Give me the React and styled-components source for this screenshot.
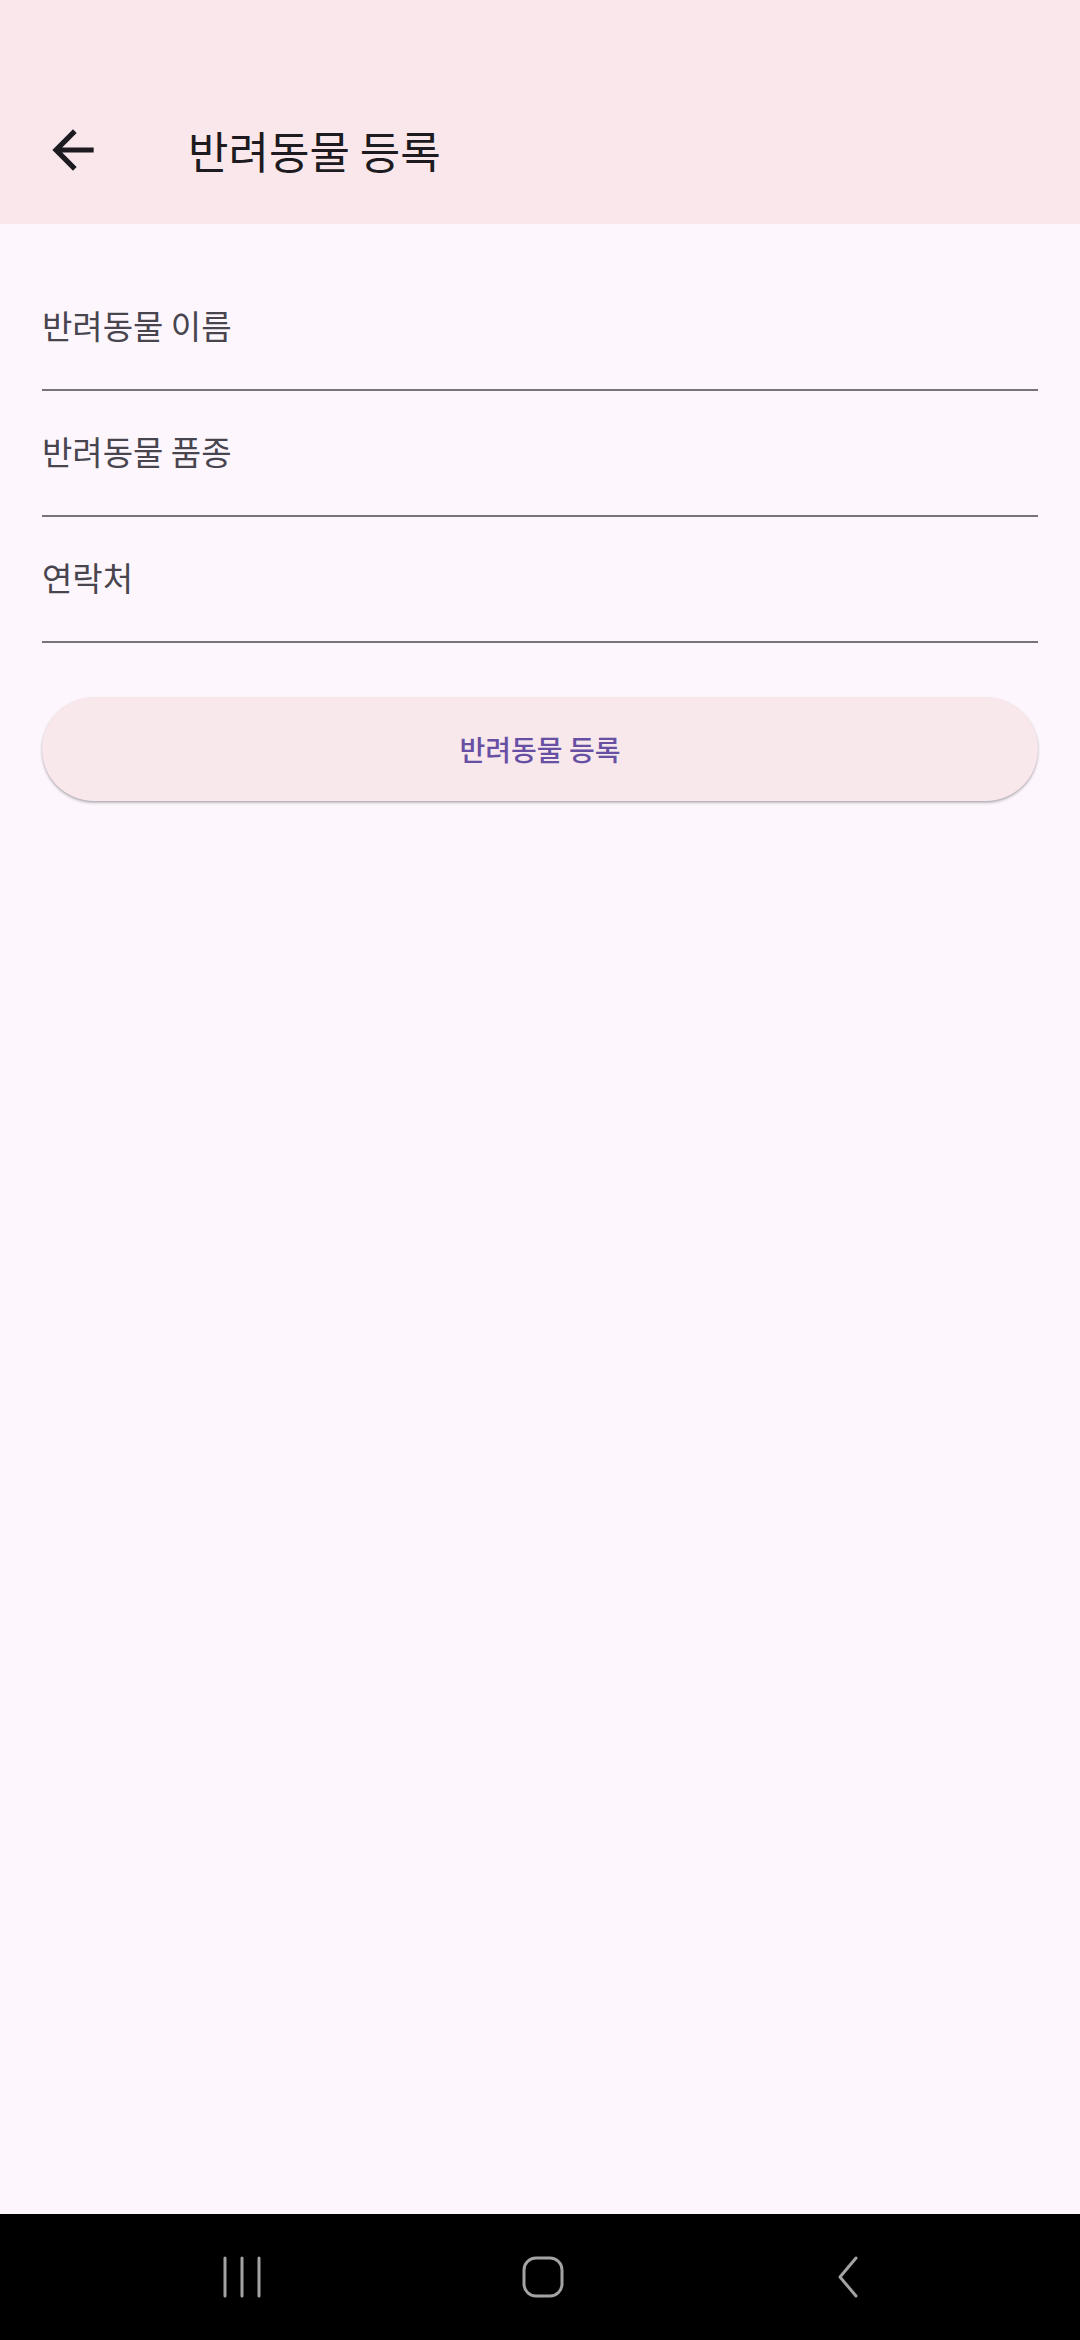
import React from "react";
import styled, { createGlobalStyle } from "styled-components";

const GlobalStyle = createGlobalStyle`
  html, body {
    margin: 0;
    padding: 0;
    background: #fdf7fd;
    overflow: hidden;
  }
  body {
    font-family: "Noto Sans CJK KR", "Noto Sans", Roboto, sans-serif;
  }
`;

const Screen = styled.div`
  width: 1080px;
  height: 2340px;
  display: flex;
  flex-direction: column;
  background: #fdf7fd;
`;

const Header = styled.header`
  height: 224px;
  background: #f9e7ec;
  display: flex;
  align-items: flex-end;
  box-sizing: border-box;
  padding-top: 75px;
`;

const Toolbar = styled.div`
  height: 149px;
  width: 100%;
  display: flex;
  align-items: center;
  padding-left: 42px;
`;

const BackButton = styled.button`
  width: 62px;
  height: 62px;
  padding: 0;
  border: none;
  background: transparent;
  display: flex;
  align-items: center;
  justify-content: center;
`;

const Title = styled.h1`
  margin: 0 0 0 84px;
  font-size: 44px;
  font-weight: 400;
  color: #1d1b20;
  letter-spacing: 0;
`;

const Form = styled.main`
  flex: 1;
  padding: 41px 42px 0;
  display: flex;
  flex-direction: column;
`;

const Field = styled.label`
  height: 124px;
  display: flex;
  align-items: center;
  border-bottom: 2px solid #77727c;
`;

const FieldLabel = styled.span`
  font-size: 33px;
  color: #49454f;
  margin-top: -4px;
`;

const SubmitButton = styled.button`
  margin-top: 54px;
  height: 104px;
  border: none;
  border-radius: 52px;
  background: #f8e8ec;
  box-shadow: 0 2px 3px rgba(0, 0, 0, 0.22), 0 1px 2px rgba(0, 0, 0, 0.12);
  font-family: inherit;
  font-size: 28px;
  font-weight: 500;
  color: #6750a4;
  display: flex;
  align-items: center;
  justify-content: center;
`;

const NavBar = styled.nav`
  height: 126px;
  background: #000;
  display: grid;
  grid-template-columns: repeat(3, 1fr);
  align-items: center;
  justify-items: center;
`;

const NavIcon = styled.svg`
  display: block;
  color: #a3a3a3;
`;

const ArrowBack = () => (
  <svg width="62" height="62" viewBox="0 0 24 24">
    <path
      fill="#1d1b20"
      d="M20 11H7.83l5.59-5.59L12 4l-8 8 8 8 1.41-1.41L7.83 13H20v-2z"
    />
  </svg>
);

const fields = ["반려동물 이름", "반려동물 품종", "연락처"];

export default function App() {
  return (
    <Screen>
      <GlobalStyle />
      <Header>
        <Toolbar>
          <BackButton aria-label="뒤로">
            <ArrowBack />
          </BackButton>
          <Title>반려동물 등록</Title>
        </Toolbar>
      </Header>

      <Form>
        {fields.map((f) => (
          <Field key={f}>
            <FieldLabel>{f}</FieldLabel>
          </Field>
        ))}
        <SubmitButton>반려동물 등록</SubmitButton>
      </Form>

      <NavBar>
        <NavIcon width="40" height="44" viewBox="0 0 40 44" style={{ marginLeft: 124 }}>
          <g stroke="currentColor" strokeWidth="3" strokeLinecap="round">
            <line x1="3" y1="3" x2="3" y2="41" />
            <line x1="20" y1="3" x2="20" y2="41" />
            <line x1="37" y1="3" x2="37" y2="41" />
          </g>
        </NavIcon>
        <NavIcon width="44" height="44" viewBox="0 0 44 44" style={{ marginLeft: 6 }}>
          <rect x="3" y="3" width="38" height="38" rx="12" fill="none" stroke="currentColor" strokeWidth="3" />
        </NavIcon>
        <NavIcon width="28" height="44" viewBox="0 0 28 44" style={{ marginRight: 108 }}>
          <polyline points="24,3 8,22 24,41" fill="none" stroke="currentColor" strokeWidth="3" strokeLinecap="round" strokeLinejoin="round" />
        </NavIcon>
      </NavBar>
    </Screen>
  );
}
